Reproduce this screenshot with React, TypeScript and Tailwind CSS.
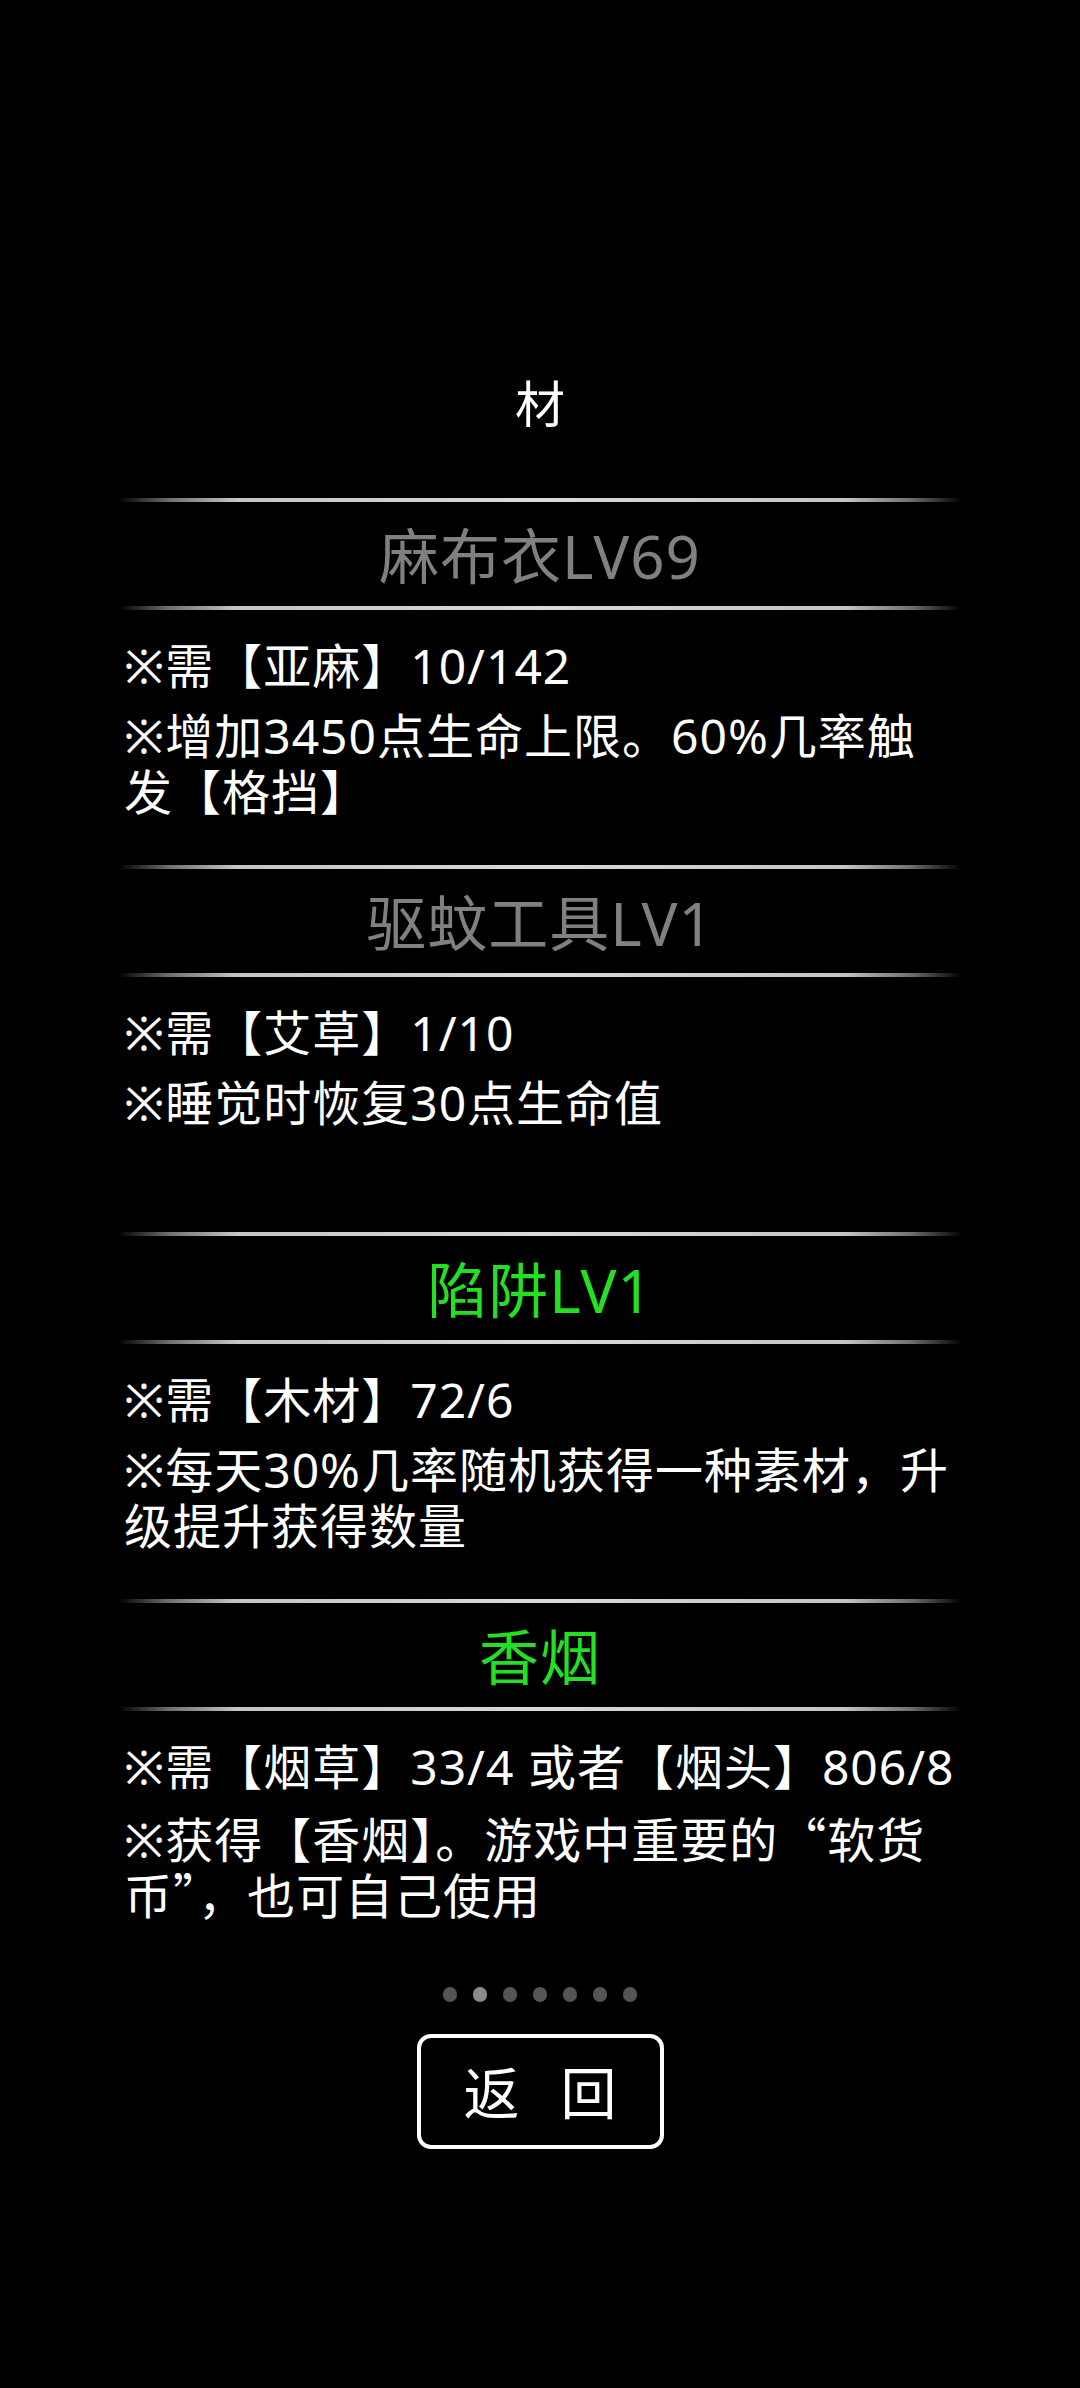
import React from "react";

const FONT = { fontFamily: '"Noto Sans", "Noto Sans CJK SC", sans-serif' };

function Line() {
  return (
    <div className="mx-auto h-[4px] w-[844px] rounded-full bg-[linear-gradient(90deg,rgba(200,200,200,0)_0%,rgba(200,200,200,0.55)_6%,#c4c4c4_14%,#dadada_50%,#c4c4c4_86%,rgba(200,200,200,0.55)_94%,rgba(200,200,200,0)_100%)]" />
  );
}

type Section = {
  title: string;
  green: boolean;
  paras: string[][];
};

const sections: Section[] = [
  {
    title: "麻布衣LV69",
    green: false,
    paras: [["※需【亚麻】10/142"], ["※增加3450点生命上限。60%几率触", "发【格挡】"]],
  },
  {
    title: "驱蚊工具LV1",
    green: false,
    paras: [["※需【艾草】1/10"], ["※睡觉时恢复30点生命值", ""]],
  },
  {
    title: "陷阱LV1",
    green: true,
    paras: [["※需【木材】72/6"], ["※每天30%几率随机获得一种素材，升", "级提升获得数量"]],
  },
  {
    title: "香烟",
    green: true,
    paras: [["※需【烟草】33/4 或者【烟头】806/8"], ["※获得【香烟】。游戏中重要的“软货", "币”，也可自己使用"]],
  },
];

function Rich({ text }: { text: string }) {
  const parts = text.split(/([“”])/);
  return (
    <>
      {parts.map((p, i) =>
        p === "“" || p === "”" ? (
          <span key={i} style={{ fontFamily: '"Noto Sans CJK SC", sans-serif' }}>
            {p}
          </span>
        ) : (
          <React.Fragment key={i}>{p}</React.Fragment>
        )
      )}
    </>
  );
}

export default function App() {
  return (
    <div className="min-h-[2388px] w-[1080px] bg-black text-white" style={FONT}>
      <div className="flex flex-col pt-[376px]">
        <div className="h-[56px] text-center text-[50px] leading-[56px] text-white">材</div>
        <div className="h-[66px]" />
        {sections.map((s, i) => (
          <div key={i} className="flex flex-col">
            <Line />
            <div
              className={`flex h-[104px] items-center justify-center pt-[4px] text-[60px] leading-[64px] tracking-[1px] ${
                s.green ? "text-[#22e022]" : "text-[#808080]"
              }`}
            >
              {s.title}
            </div>
            <Line />
            <div
              className={`ml-[124px] flex w-[860px] flex-col gap-[14px] pt-[28px] text-[48px] tracking-[1px] text-white ${
                i < sections.length - 1 ? "pb-[45px]" : "pb-0"
              }`}
            >
              {s.paras.map((p, j) => (
                <div key={j} className="flex flex-col">
                  {p.map((ln, k) => (
                    <div key={k} className="h-[56px] whitespace-nowrap leading-[56px]">
                      <Rich text={ln} />
                    </div>
                  ))}
                </div>
              ))}
            </div>
          </div>
        ))}
        <div className="mt-[66px] flex justify-center gap-[16px]">
          {[0, 1, 2, 3, 4, 5, 6].map((d) => (
            <div
              key={d}
              className={`h-[15px] w-[14px] rounded-full ${d === 1 ? "bg-[#8a8a8a]" : "bg-[#555555]"}`}
            />
          ))}
        </div>
        <div className="mt-[32px] flex justify-center">
          <div className="flex h-[115px] w-[247px] items-center justify-center gap-[41px] rounded-[14px] border-[4px] border-white text-[56px] leading-none text-white">
            <span>返</span>
            <span>回</span>
          </div>
        </div>
      </div>
    </div>
  );
}
